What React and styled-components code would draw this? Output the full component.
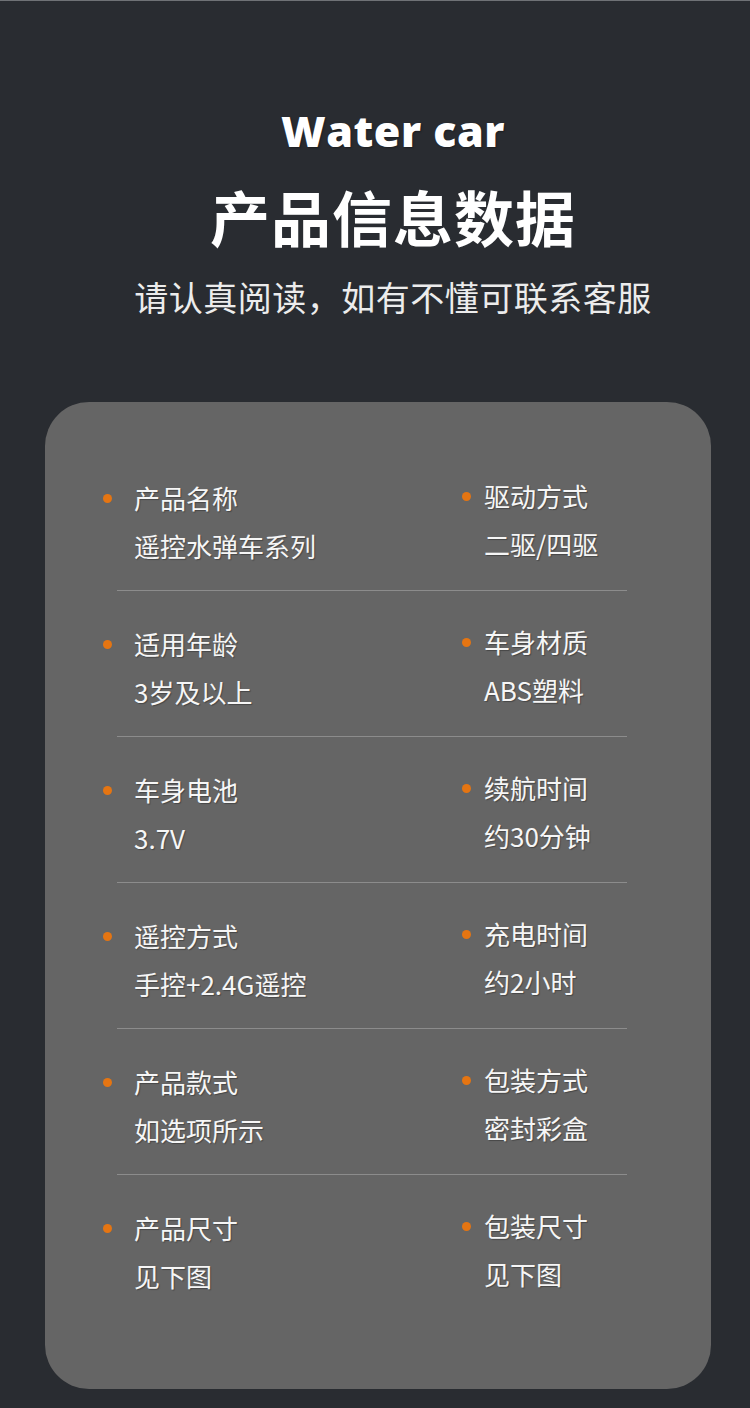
import React from 'react';
import styled, { createGlobalStyle } from 'styled-components';

const GlobalStyle = createGlobalStyle`
    html, body {
        margin: 0;
        padding: 0;
        background: #292c31;
    }
    body {
        font-family: "Noto Sans CJK SC", "Noto Sans", sans-serif;
    }
`

const Page = styled.div`
    width: 750px;
    min-height: 1408px;
    box-sizing: border-box;
    background: #292c31;
    border-top: 1px solid #6f7276;
    padding-top: 100px;
    display: flex;
    flex-direction: column;
    align-items: center;
`

const Header = styled.header`
    width: 100%;
    box-sizing: border-box;
    padding-left: 36px;
    display: flex;
    flex-direction: column;
    align-items: center;
`

const Brand = styled.div`
    font-family: "Open Sans", "Liberation Sans", sans-serif;
    font-weight: 800;
    font-size: 43px;
    line-height: 60px;
    letter-spacing: 0.5px;
    color: #ffffff;
    text-shadow: 1px 1px 2px rgba(0, 0, 0, 0.35);
`

const Title = styled.h1`
    margin: 15px 0 0;
    font-family: "Noto Sans CJK SC", sans-serif;
    font-weight: 700;
    font-size: 60px;
    line-height: 80px;
    color: #ffffff;
    letter-spacing: 1px;
`

const Subtitle = styled.p`
    margin: 16px 0 0;
    font-family: "Noto Sans CJK SC", sans-serif;
    font-weight: 400;
    font-size: 34px;
    line-height: 50px;
    letter-spacing: 0.5px;
    color: #ececec;
`

const Card = styled.section`
    align-self: flex-start;
    margin: 80px 0 0 45px;
    width: 666px;
    box-sizing: border-box;
    background: #656565;
    border-radius: 44px;
    padding: 43px 84px 69px 72px;
`

const Row = styled.div`
    display: grid;
    grid-template-columns: 345px 1fr;
    padding: 29px 0 20px;
    border-bottom: 1px solid #8c8c8c;
    &:last-child {
        border-bottom: none;
    }
`

const Item = styled.div`
    position: relative;
    padding-left: ${p => p.$indent}px;
    margin-top: ${p => p.$lift}px;
    color: #f6f6f6;
    font-size: 26px;
    line-height: 48px;
    text-shadow: 1px 1px 1px rgba(0, 0, 0, 0.3);
`

const Dot = styled.span`
    position: absolute;
    left: ${p => p.$left}px;
    top: 20px;
    width: 9px;
    height: 9px;
    border-radius: 50%;
    background: #e57512;
`

const Label = styled.div``
const Value = styled.div``

const specs = [
    [['产品名称', '遥控水弹车系列'], ['驱动方式', '二驱/四驱']],
    [['适用年龄', '3岁及以上'], ['车身材质', 'ABS塑料']],
    [['车身电池', '3.7V'], ['续航时间', '约30分钟']],
    [['遥控方式', '手控+2.4G遥控'], ['充电时间', '约2小时']],
    [['产品款式', '如选项所示'], ['包装方式', '密封彩盒']],
    [['产品尺寸', '见下图'], ['包装尺寸', '见下图']],
]

const App = () => (
    <Page>
        <GlobalStyle />
        <Header>
            <Brand>Water car</Brand>
            <Title>产品信息数据</Title>
            <Subtitle>请认真阅读，如有不懂可联系客服</Subtitle>
        </Header>
        <Card>
            {specs.map((pair, i) => (
                <Row key={i}>
                    <Item $indent={17} $lift={0}>
                        <Dot $left={-14} />
                        <Label>{pair[0][0]}</Label>
                        <Value>{pair[0][1]}</Value>
                    </Item>
                    <Item $indent={22} $lift={-2}>
                        <Dot $left={0} />
                        <Label>{pair[1][0]}</Label>
                        <Value>{pair[1][1]}</Value>
                    </Item>
                </Row>
            ))}
        </Card>
    </Page>
)

export default App;
